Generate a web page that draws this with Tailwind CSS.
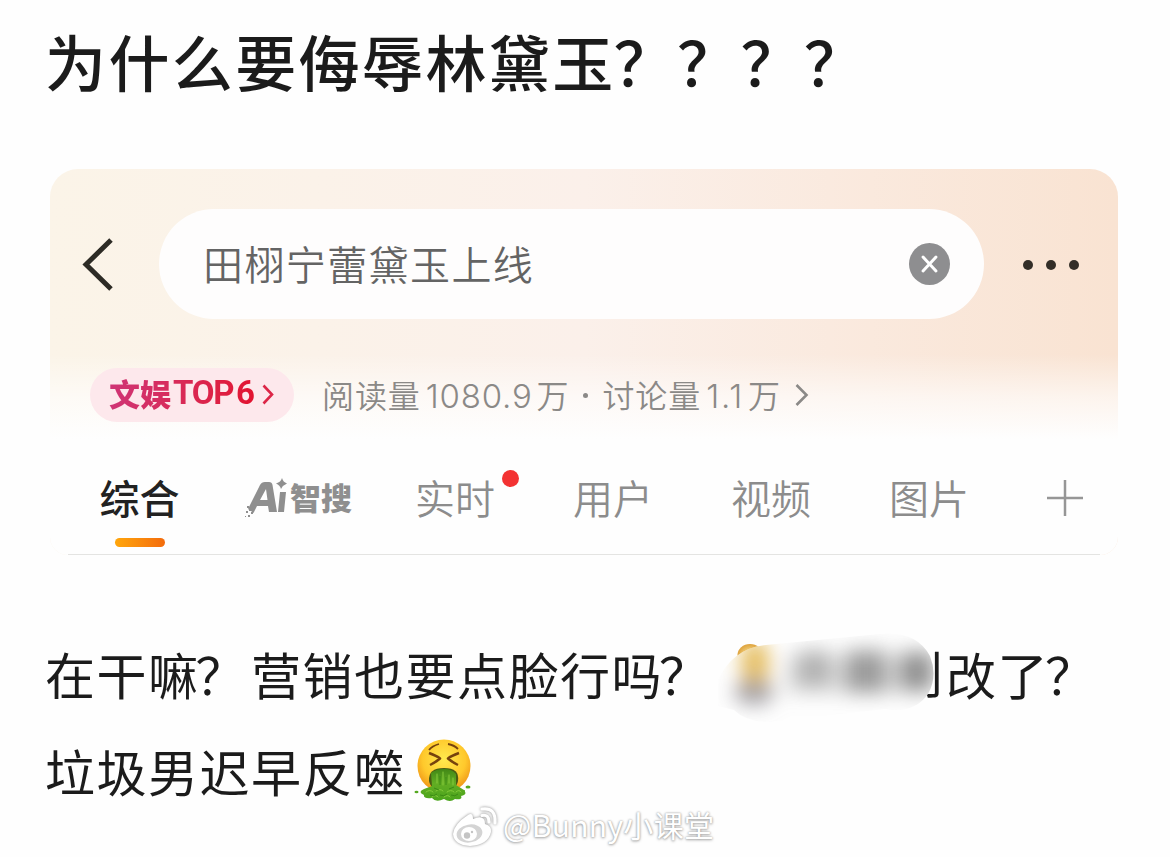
<!DOCTYPE html>
<html lang="zh-CN">
<head>
<meta charset="UTF-8">
<meta name="viewport" content="width=device-width, initial-scale=1.0">
<title>为什么要侮辱林黛玉</title>
<script src="https://cdn.jsdelivr.net/npm/@tailwindcss/browser@4"></script>
</head>
<body class="bg-[#fefefe] text-[#1b1b1b] font-['Noto_Sans_CJK_SC',sans-serif]">
<main class="w-[1170px] h-[857px] overflow-hidden flex flex-col pl-[45px] whitespace-nowrap">

  <h1 class="h-[169px] pt-[14px] text-[61px] leading-[94px] tracking-[2.4px] font-medium">为什么要侮辱林黛玉<span class="-ml-0.5">？？？？</span></h1>

  <!-- search card -->
  <section class="ml-[5px] w-[1068px] h-[386px] shrink-0 rounded-t-[28px] rounded-b-[18px] overflow-hidden bg-linear-to-r from-[#fbf4e8] via-[#fbf0ea] to-[#f9e3d2]">
    <div class="h-full flex flex-col bg-linear-to-b from-white/0 from-[48%] via-white/60 via-[59%] to-[#fefefe] to-[70%]">
      <div class="flex items-center h-[110px] mt-10">
        <svg class="ml-[31px] w-[34px] h-[54px]" viewBox="0 0 34 54" fill="none" stroke="#2d2b25" stroke-width="5"><path d="M30 3 L5 27.500 L30 52"/></svg>
        <div class="ml-[44px] w-[825px] h-[110px] rounded-full bg-[#fefdfd] flex items-center pl-[44px] pr-[34px]">
          <span class="flex-1 -mt-0.5 text-[40px] leading-[60px] tracking-[1.4px] font-[350] text-[#646464]">田栩宁蕾黛玉上线</span>
          <svg class="w-[41px] h-[42px]" viewBox="0 0 41 42"><ellipse cx="20.500" cy="21" rx="20.500" ry="21" fill="#8e8e90"/><path d="M14 14 L27 28 M27 14 L14 28" stroke="#fff" stroke-width="3" stroke-linecap="round"/></svg>
        </div>
        <svg class="ml-[38px] mt-px w-[60px] h-[12px]" viewBox="0 0 60 12" fill="#332e28"><circle cx="6" cy="6" r="5"/><circle cx="29" cy="6" r="5"/><circle cx="52" cy="6" r="5"/></svg>
      </div>

      <div class="flex items-center h-[54px] mt-[49px] pl-10">
        <div class="flex items-center w-[204px] h-[54px] rounded-full bg-[#fde8ec] pl-[19px]">
          <span class="flex items-center -mt-1 bg-linear-to-r from-[#cf3475] to-[#e2122f] bg-clip-text text-transparent font-black">
            <span class="text-[31px] leading-[46px] w-[64px]">文娱</span>
            <span class="font-['Roboto'] font-bold text-[33px] leading-[46px] w-[63px] tracking-[-1.2px]">TOP</span>
            <span class="font-['Roboto'] font-bold text-[33px] leading-[46px] w-[18px] tracking-[-1px]">6</span>
          </span>
          <svg class="ml-2 w-[12px] h-[22px]" viewBox="0 0 12 22" fill="none" stroke="#dc2647" stroke-width="2.600"><path d="M1.500 1.500 L10 10.500 L1.500 19.500"/></svg>
        </div>
        <div class="flex items-center ml-[28px] font-[350] text-[#8b8987] text-[32px] leading-[48px] tracking-[0.9px]">
          <span class="-mt-0.5">阅读量</span>
          <span class="font-['Inter'] font-light text-[33px] ml-[5px] mt-0.5 tracking-[0.8px]">1080.9</span>
          <span class="-mt-0.5 ml-1">万</span>
          <span class="w-[5px] h-[5px] rounded-full bg-[#8b8987] ml-[14px] mr-[14px]"></span>
          <span class="-mt-0.5">讨论量</span>
          <span class="font-['Inter'] font-light text-[33px] ml-[5px] mt-0.5 tracking-[1.8px]">1.1</span>
          <span class="-mt-0.5 ml-1">万</span>
          <svg class="ml-[14px] w-[14px] h-[24px]" viewBox="0 0 14 24" fill="none" stroke="#8b8987" stroke-width="2.600"><path d="M1.500 2 L11.500 12 L1.500 22"/></svg>
        </div>
      </div>

      <!-- tabs -->
      <nav class="relative flex h-[132px] pt-[45px] text-[40px] leading-[60px] text-[#8c8c8c] font-[350]">
        <div class="ml-[49px] w-[81px] flex flex-col items-center text-[#222] font-medium">
          <span>综合</span>
          <i class="mt-[11px] w-[50px] h-[9px] rounded-full bg-linear-to-r from-[#ffa60c] to-[#f36b0c]"></i>
        </div>
        <svg class="ml-[64px] mt-2.5 w-[110px] h-[44px] overflow-visible" viewBox="0 0 110 44" fill="#8f8f8f">
          <path fill-rule="evenodd" d="M4 32 L16 8 Q17.500 5 21 5 H25 Q28 5 28.500 8 L33 35 H25 L24 29 H13 L9.500 36 L7 34 Z M16 23 L22 12 L23.500 23 Z"/>
          <path d="M36 15 H42 L40 35 H34 Z M38 1 Q39 5 43 6.500 Q39 8 37 12 Q36 8 32 6.500 Q37 5 38 1 Z"/>
          <path d="M5 32h2v2h-2zM3 29h2v2h-2zM7 35h2v2h-2zM2 34h2v2h-2zM4 38h2v2h-2zM1 39h1v1h-1z"/>
          <text x="46" y="33" font-size="31" font-weight="900" textLength="62" lengthAdjust="spacingAndGlyphs">智搜</text>
        </svg>
        <div class="relative ml-[61px] w-[81px]">实时<i class="absolute left-[87px] top-[3px] w-[17px] h-[17px] rounded-full bg-[#f33232]"></i></div>
        <span class="ml-[77px] w-[81px]">用户</span>
        <span class="ml-[77px] w-[81px]">视频</span>
        <span class="ml-[77px] w-[81px]">图片</span>
        <svg class="ml-[77px] mt-[13px] w-[36px] h-[36px]" viewBox="0 0 36 36" stroke="#969696" stroke-width="2.500"><path d="M18 0V36M0 18H36"/></svg>
      </nav>
      <div class="h-px mx-[18px] bg-[#e4e4e2]"></div>
    </div>
  </section>

  <!-- post text -->
  <div class="flex mt-[70px] h-[97px] text-[50px] leading-[97px] tracking-[1.5px]">
    <span class="w-[673px]">在干嘛<span class="-ml-1 mr-1">？</span>营销也要点脸行吗<span class="-ml-1">？</span></span>
    <svg class="mt-[2px] w-[228px] h-[97px]" viewBox="718 627 228 97">
      <defs>
        <clipPath id="smear"><path d="M718 680 Q733 648 766 645 L880 634 Q916 630 930 656 Q938 676 928 694 Q914 714 885 709 L770 722 Q746 722 734 710 L718 706Z"/></clipPath>
        <filter id="soft" x="-50%" y="-50%" width="200%" height="200%"><feGaussianBlur stdDeviation="10"/></filter>
        <radialGradient id="head"><stop offset="0" stop-color="#fff0a8"/><stop offset="1" stop-color="#dea23c"/></radialGradient>
      </defs>
      <text x="893" y="693" font-size="50" fill="#1b1b1b" letter-spacing="0">别</text>
      <ellipse cx="750" cy="655" rx="12.500" ry="11" fill="url(#head)"/>
      <g clip-path="url(#smear)">
        <rect x="718" y="627" width="228" height="97" fill="#fefefe"/>
        <g filter="url(#soft)">
          <ellipse cx="755" cy="663" rx="14" ry="24" fill="#e0b040" opacity=".85"/>
          <ellipse cx="754" cy="692" rx="20" ry="13" fill="#7d7b80" opacity=".7"/>
          <rect x="785" y="656" width="148" height="38" fill="#999" opacity=".3"/>
          <rect x="798" y="650" width="32" height="36" fill="#888" opacity=".55"/>
          <rect x="846" y="650" width="40" height="42" fill="#777" opacity=".65"/>
          <rect x="900" y="652" width="34" height="38" fill="#777" opacity=".75"/>
        </g>
      </g>
    </svg>
    <span>改了<span class="-ml-1">？</span></span>
  </div>
  <div class="flex h-[97px] text-[50px] leading-[97px] tracking-[1.5px]">
    <span class="w-[369px]">垃圾男迟早反噬</span>
    <svg class="mt-[16px] w-[58px] h-[64px]" viewBox="0 0 58 64">
      <defs>
        <radialGradient id="face" cx=".5" cy=".38" r=".62"><stop offset="0" stop-color="#ffe94e"/><stop offset=".65" stop-color="#ffc92c"/><stop offset="1" stop-color="#ee9417"/></radialGradient>
        <linearGradient id="goo" x1="0" y1="0" x2="0" y2="1"><stop offset="0" stop-color="#418716"/><stop offset=".45" stop-color="#62ad23"/><stop offset="1" stop-color="#4aa41c"/></linearGradient>
      </defs>
      <circle cx="30" cy="28" r="26.500" fill="url(#face)"/>
      <path d="M15 12 Q18 8 25 6 M34 6 Q40 7 44 11" fill="none" stroke="#76420d" stroke-width="1.800"/>
      <path d="M15 15 Q23 18 26 20.500 Q22 24 16 27 M45 15 Q37 18 34 20.500 Q38 24 44 27" fill="none" stroke="#76420d" stroke-width="2.500" stroke-linejoin="round"/>
      <path d="M15 43 Q14 30 30 30 Q46 30 44 43 Q43 48 40 49 H19 Q16 48 15 43Z" fill="#4a5c12"/>
      <path d="M17 35 Q22 31 30 31 Q38 31 42 36 L42 47 L50 52 Q54 57 47 58 Q49 62 41 61 Q36 65 30 61 Q22 65 18 60 Q9 61 10 57 Q3 54 10 51 L18 48Z" fill="url(#goo)"/>
      <g fill="none" stroke="#86cc3c" stroke-width="1" stroke-linecap="round"><path d="M23 36v9M29 34v13M35 37v8M39 40v7M12 54q4-3 7 0M22 53q4-3 7 0M33 54q4-3 7 0M42 54q3-3 5 0M18 59q4-3 6 0M30 59q4-3 6 0"/></g>
      <g fill="none" stroke="#3b8a14" stroke-width="1"><path d="M26 38v9M32 39v8M16 57q4 2 7-1M26 57q4 2 7-1M37 57q4 2 7-1M20 50l5 2M35 51l5-2"/></g>
      <ellipse cx="2.500" cy="54" rx="2" ry="1.300" fill="#55a820"/><ellipse cx="54" cy="49" rx="2.500" ry="1.500" fill="#55a820"/><circle cx="50" cy="53" r="1" fill="#55a820"/>
    </svg>
  </div>

  <!-- watermark -->
  <footer class="relative flex items-center -mt-[15px] ml-[406px] h-[48px] text-white">
    <svg class="w-[47px] h-[42px] overflow-visible drop-shadow-[0_0_1.5px_#888]" viewBox="0 0 47 42">
      <path fill="#fff" d="M17 8 Q22 5 22 12 Q34 7 34 17 Q41 19 40 25 Q37 38 19 39 Q3 38 2 27 Q3 17 17 8Z"/>
      <ellipse cx="18.500" cy="26.500" rx="13" ry="9" transform="rotate(-10 18.500 26.500)" fill="#d4d4d4"/>
      <ellipse cx="18" cy="27" rx="8" ry="7" fill="#fff"/>
      <circle cx="16" cy="28.500" r="3.200" fill="#c4c4c4"/><circle cx="21" cy="25" r="1.200" fill="#c4c4c4"/>
      <path d="M31 2 Q45 0 44 16 M31 8.500 Q38 7 38 15" fill="none" stroke="#fff" stroke-width="3.200" stroke-linecap="round"/>
    </svg>
    <span class="ml-[5px] -mt-2 text-[30px] leading-[44px] tracking-[0.3px] [text-shadow:0_0_2px_#999,0_1px_3px_#aaa]">@Bunny小课堂</span>
  </footer>
</main>
</body>
</html>
